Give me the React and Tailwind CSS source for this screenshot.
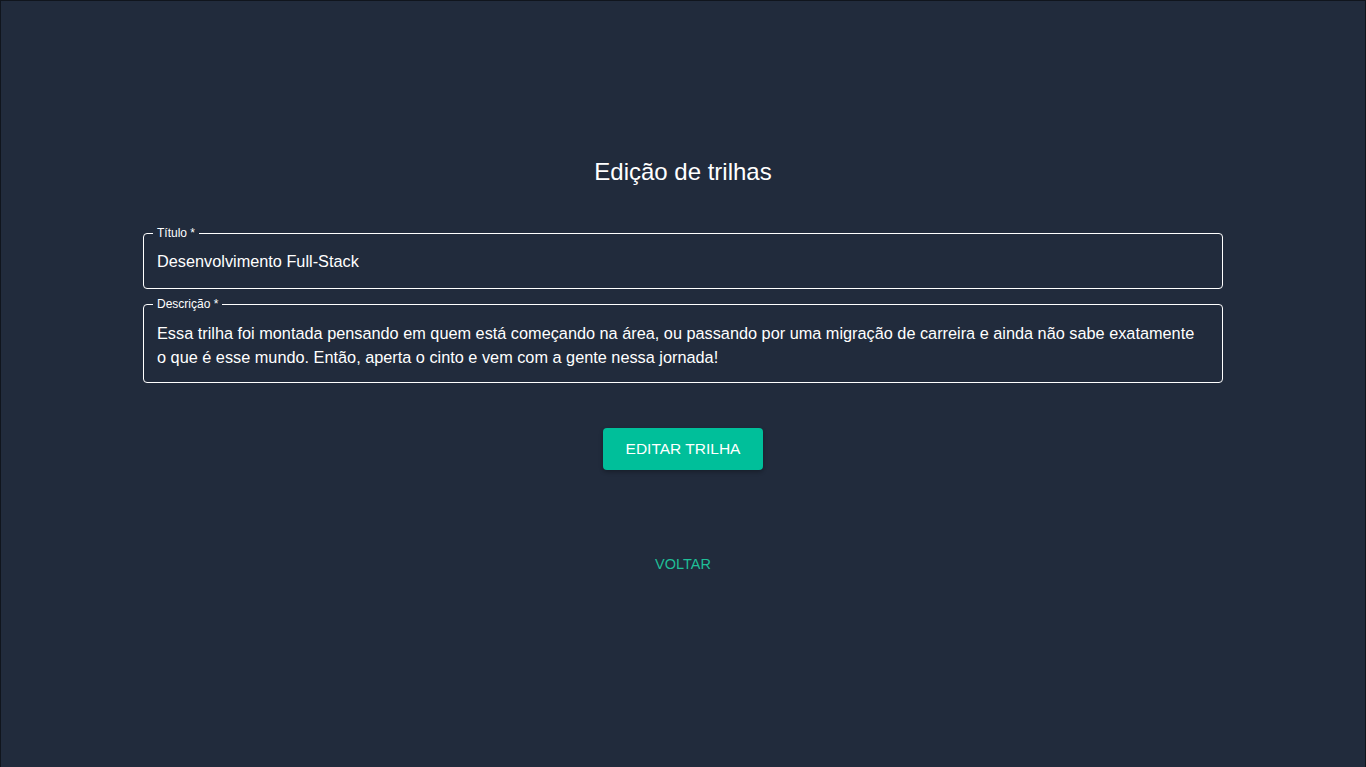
const Field = ({ label, className, children }) => {
  return (
    <fieldset className={`border border-white rounded-[4px] pl-[13px] m-0 min-w-0 ${className}`}>
      <legend className="ml-[-4px] px-[4px] text-[12px] leading-[12px] text-white">
        {label}
      </legend>
      {children}
    </fieldset>
  );
};

const App = () => {
  return (
    <div
      className="w-full h-[767px] bg-[#212b3c] border-t border-x border-[#10151d] flex flex-col items-center"
      style={{ fontFamily: '"Liberation Sans", Arial, sans-serif' }}
    >
      <h1 className="mt-[156px] text-[24px] leading-[30px] text-white">
        Edição de trilhas
      </h1>

      <form className="w-[1080px] mt-[40px] flex flex-col gap-[9px]">
        <Field label="Título *" className="pr-[13px] pt-[7px] pb-[11px]">
          <input
            type="text"
            defaultValue="Desenvolvimento Full-Stack"
            className="w-full bg-transparent text-white text-[16.3px] leading-[23px] outline-none py-[4px]"
          />
        </Field>
        <Field label="Descrição *" className="pr-[22px] pt-[9px] pb-[13px]">
          <div className="text-white text-[16.3px] leading-[24px] pt-[2px]">
            Essa trilha foi montada pensando em quem está começando na área, ou passando por uma migração de carreira e ainda não sabe exatamente o que é esse mundo. Então, aperta o cinto e vem com a gente nessa jornada!
          </div>
        </Field>
      </form>

      <button
        type="button"
        className="mt-[45px] w-[160px] h-[42px] rounded-[4px] bg-[#00bf9a] text-white text-[15.5px] uppercase shadow-[0_2px_4px_rgba(0,0,0,0.3)]"
      >
        Editar trilha
      </button>

      <button
        type="button"
        className="mt-[84px] text-[#1fbf97] text-[14.5px] uppercase"
      >
        Voltar
      </button>
    </div>
  );
};

export default App;
